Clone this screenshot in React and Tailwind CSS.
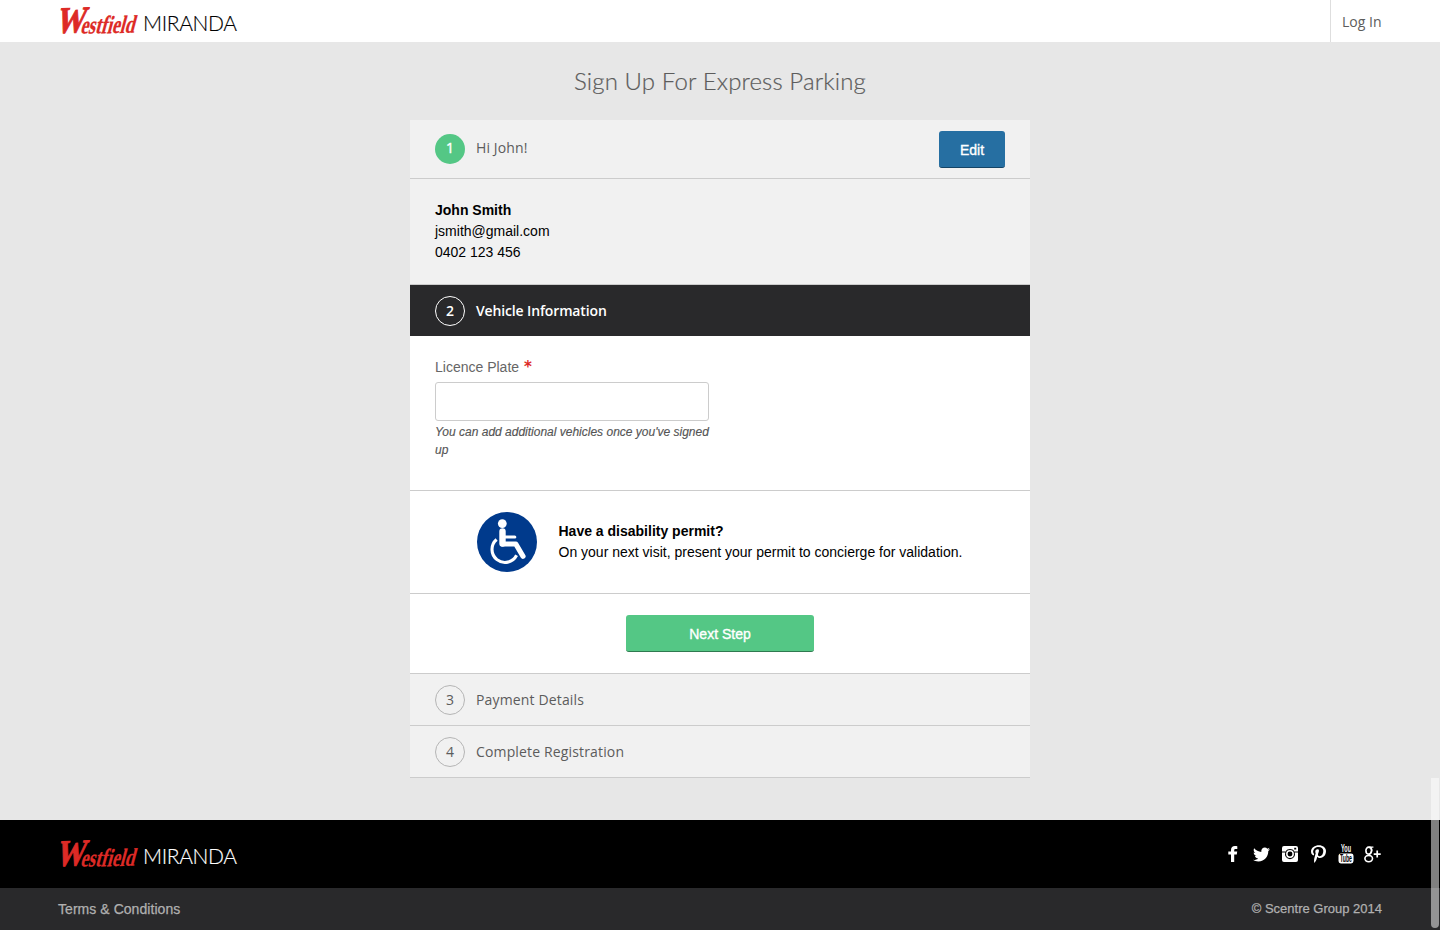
import React from "react";
import { FaTwitter, FaPinterestP } from "react-icons/fa";

function Logo({ dark }) {
  return (
    <div className="flex h-8 items-center">
      <svg width="180" height="32" viewBox="0 0 180 32" className="block overflow-visible">
        <g fill="#dd2a26" stroke="#dd2a26" fontFamily="Liberation Serif, serif" fontWeight="700">
          <text x="0" y="0" fontSize="37" strokeWidth="0.9" textLength="29" lengthAdjust="spacingAndGlyphs" transform="translate(-3 28) skewY(-2) skewX(-14)">W</text>
          <text x="0" y="0" fontSize="25" strokeWidth="0.3" textLength="54" lengthAdjust="spacingAndGlyphs" transform="translate(22 28.600) skewY(-1) skewX(-15)">estfield</text>
        </g>
        <text x="85" y="25.5" fontSize="21" textLength="94" fontFamily="Lato, sans-serif" fontWeight="300" fill={dark ? "#ffffff" : "#000000"} stroke={dark ? "#ffffff" : "#000000"} strokeWidth="0.15">
          MIRANDA
        </text>
      </svg>
    </div>
  );
}

function FacebookIcon() {
  return (
    <svg width="10" height="16" viewBox="0 0 10 16" fill="#fff" className="block">
      <path d="M3 16V8.400H.300V5.500H3V4C3 1.400 4.500 0 6.900 0c.900 0 1.600.100 2.400.200v2.700H7.700C6.600 2.900 6.200 3.400 6.200 4.300v1.200h3l-.400 2.900H6.200V16z" />
    </svg>
  );
}

function InstagramIcon() {
  return (
    <svg width="16" height="16" viewBox="0 0 16 16" fill="#fff" className="block">
      <path fillRule="evenodd" d="M2 0h12a2 2 0 0 1 2 2v3.400h-3.700a5 5 0 0 0-8.600 0H0V2a2 2 0 0 1 2-2zm10.200 1.700v1.900h2V1.700z" />
      <path d="M0 6.500h3.300a5 5 0 1 0 9.400 0H16V14a2 2 0 0 1-2 2H2a2 2 0 0 1-2-2z" />
      <circle cx="8" cy="8" r="3.200" fill="none" stroke="#fff" strokeWidth="1.500" />
    </svg>
  );
}

function YouTubeIcon() {
  return (
    <svg width="16" height="19" viewBox="0 0 16 19" fontFamily="Liberation Sans Narrow, Liberation Sans, sans-serif" className="block overflow-visible">
      <text x="3" y="7.300" fontSize="10.500" fontWeight="700" textLength="10" lengthAdjust="spacingAndGlyphs" fill="#fff">You</text>
      <rect x="0.500" y="8.400" width="15" height="10" rx="2.400" fill="#fff" />
      <text x="2" y="17" fontSize="10" fontWeight="700" textLength="12" lengthAdjust="spacingAndGlyphs" fill="#000">Tube</text>
    </svg>
  );
}

function GooglePlusIcon() {
  return (
    <svg width="17" height="17" viewBox="0 0 17 17" fill="none" stroke="#fff" strokeWidth="1.600" className="block">
      <ellipse cx="4.700" cy="4.600" rx="2.800" ry="3.500" />
      <path d="M4.800 1.100h4.600M7 1.800c1.500 1.800 1 4.200-.600 5.300-1.300 1-1.200 1.700 0 2.500" strokeWidth="1.300" />
      <ellipse cx="4.700" cy="12.600" rx="3.800" ry="3.200" />
      <path d="M13.200 4.600v7M9.700 8.100h7" strokeWidth="1.700" />
    </svg>
  );
}

function WheelchairIcon() {
  return (
    <svg width="60" height="60" viewBox="0 0 60 60" className="block shrink-0">
      <circle cx="30" cy="30" r="30" fill="#003a8c" />
      <circle cx="25.300" cy="11.600" r="4.400" fill="#fff" />
      <g fill="none" stroke="#fff" strokeLinejoin="round" strokeLinecap="round">
        <path d="M25.500 19.500V31.600" strokeWidth="6.400" />
        <path d="M25.800 32H38.800L46 44.200" strokeWidth="5.200" />
        <path d="M26 25H37.800" strokeWidth="3.100" />
        <path d="M19.600 27.500A13 13 0 1 0 39.600 43.300" strokeWidth="3.100" strokeLinecap="butt" />
      </g>
    </svg>
  );
}

export default function App() {
  return (
    <div className="relative flex h-[930px] w-[1440px] flex-col overflow-hidden bg-[#e7e7e7] font-['Liberation_Sans',sans-serif] text-sm text-black">
      <header className="flex h-[42px] shrink-0 justify-between bg-white pl-[58px]">
        <div className="pt-[5px]"><Logo /></div>
        <a className="flex w-[110px] items-center border-l border-[#dedede] pl-[11px] pb-px pt-[3px] font-['Open_Sans',sans-serif] text-[14px] text-[#5c5c5c]">Log In</a>
      </header>

      <main className="flex grow flex-col items-center">
        <h1 className="h-[78px] pt-[21px] font-['Lato',sans-serif] text-[24px] leading-9 font-light tracking-[0.12px] text-[#5c5c5c] [-webkit-text-stroke:0.2px_#5c5c5c]">Sign Up For Express Parking</h1>
        <div className="flex w-[620px] flex-col">
          <section className="flex h-[59px] items-center border-b border-[#ccc] bg-[#f1f1f1] px-[25px] font-['Open_Sans',sans-serif]">
            <span className="flex size-[30px] items-center justify-center rounded-full bg-[#54c785] pb-[2px] text-white [-webkit-text-stroke:0.4px_white]">1</span>
            <span className="ml-[11px] grow pb-[3px] tracking-[0.12px] text-[#5c5c5c]">Hi John!</span>
            <button className="h-[37px] w-[66px] rounded-[3px] border-b border-[#144466] bg-[#266fa2] pt-[2px] font-['Liberation_Sans',sans-serif] text-white [-webkit-text-stroke:0.35px_white]">Edit</button>
          </section>
          <section className="h-[106px] border-b border-[#ccc] bg-[#f1f1f1] px-[25px] pt-[21px] leading-[21px]">
            <p className="font-bold">John Smith</p>
            <p>jsmith@gmail.com</p>
            <p>0402 123 456</p>
          </section>
          <section className="flex h-[51px] items-center bg-[#29292b] px-[25px] font-['Open_Sans',sans-serif] font-semibold text-white">
            <span className="flex size-[30px] items-center justify-center rounded-full border border-white">2</span>
            <span className="ml-[11px] tracking-[-0.14px]">Vehicle Information</span>
          </section>
          <section className="h-[155px] border-b border-[#ccc] bg-white px-[25px] pt-[21px]">
            <label className="flex h-[25px] leading-[21px] text-[#666]">Licence Plate <span className="ml-[5px] font-['DejaVu_Sans',sans-serif] text-[15px] font-bold text-[#dd2a26]">*</span></label>
            <input className="block h-[39px] w-[274px] rounded-[3px] border border-[#ccc] bg-white" />
            <p className="mt-[2px] w-[276px] text-[12px] leading-[18px] text-[#555] italic [-webkit-text-stroke:0.15px_#555]">You can add additional vehicles once you've signed up</p>
          </section>
          <section className="flex h-[103px] items-center border-b border-[#ccc] bg-white pl-[67px]">
            <WheelchairIcon />
            <div className="ml-[21.500px] leading-[21px]">
              <p className="font-bold">Have a disability permit?</p>
              <p>On your next visit, present your permit to concierge for validation.</p>
            </div>
          </section>
          <section className="flex h-20 items-center justify-center border-b border-[#ccc] bg-white">
            <button className="h-[37px] w-[188px] rounded-[3px] border-b border-[#2f7a50] bg-[#54c785] pt-[2px] text-white [-webkit-text-stroke:0.35px_white]">Next Step</button>
          </section>
          <section className="flex h-[52px] items-center border-b border-[#ccc] bg-[#f1f1f1] px-[25px] font-['Open_Sans',sans-serif] text-[#5c5c5c]">
            <span className="flex size-[30px] items-center justify-center rounded-full border border-[#b5b5b5]">3</span>
            <span className="ml-[11px] tracking-[0.15px]">Payment Details</span>
          </section>
          <section className="flex h-[52px] items-center border-b border-[#ccc] bg-[#f1f1f1] px-[25px] font-['Open_Sans',sans-serif] text-[#5c5c5c]">
            <span className="flex size-[30px] items-center justify-center rounded-full border border-[#b5b5b5]">4</span>
            <span className="ml-[11px] tracking-[0.15px]">Complete Registration</span>
          </section>
        </div>
      </main>

      <footer className="shrink-0">
        <div className="flex h-[68px] items-center justify-between bg-black pr-[59px] pl-[58px]">
          <div><Logo dark /></div>
          <div className="flex items-center text-white">
            <FacebookIcon />
            <FaTwitter className="ml-[15px] size-[17px]" />
            <span className="ml-[12px]"><InstagramIcon /></span>
            <FaPinterestP className="ml-[13px] h-[18px] w-[15px]" preserveAspectRatio="none" />
            <span className="ml-[12px]"><YouTubeIcon /></span>
            <span className="ml-[10px]"><GooglePlusIcon /></span>
          </div>
        </div>
        <div className="flex h-[42px] items-center justify-between bg-[#29292b] px-[58px] text-[#b0b0b0]">
          <a className="tracking-[0.05px] [-webkit-text-stroke:0.25px_#b0b0b0]">Terms &amp; Conditions</a>
          <span className="text-[13px] [-webkit-text-stroke:0.25px_#b0b0b0]">© Scentre Group 2014</span>
        </div>
      </footer>
      <div className="absolute top-[778px] left-[1431px] h-[150px] w-2 rounded-b-full bg-white/50" />
    </div>
  );
}
